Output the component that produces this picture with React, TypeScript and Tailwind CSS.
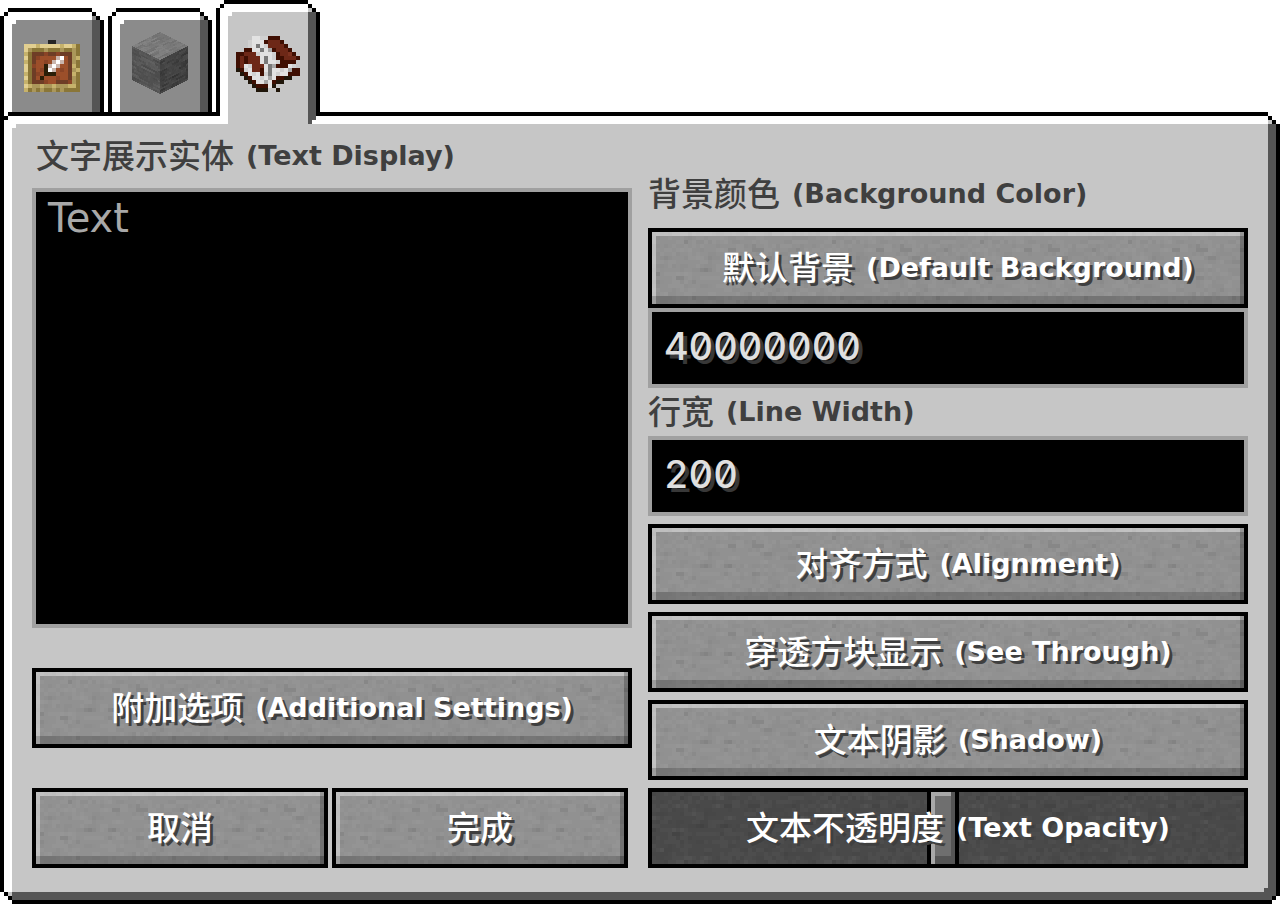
import { useId, useState, type ReactNode } from "react";

const palette: Record<string, string> = {
  x: "#000000",
  h: "#ffffff",
  c: "#c6c6c6",
  s: "#8b8b8b",
  e: "#555555",
  // item frame
  K: "#262626",
  Y: "#e2cf90",
  L: "#c6b26b",
  T: "#ab975a",
  O: "#8a7638",
  B: "#6e3d26",
  R: "#9c4f2a",
  Q: "#8a4426",
  p: "#c9b5ad",
  n: "#2b1f08",
  // book
  k: "#20160a",
  d: "#3f0f02",
  r: "#6d2817",
  m: "#7c3220",
  w: "#e2e2e2",
  l: "#d0d0d0",
  g: "#a6a6a6",
  G: "#7a7a7a",
};

function PixelArt({ rows, className = "" }: { rows: string[]; className?: string }) {
  const cols = rows[0].length;
  return (
    <svg
      aria-hidden="true"
      width={cols * 4}
      height={rows.length * 4}
      viewBox={`0 0 ${cols} ${rows.length}`}
      shapeRendering="crispEdges"
      className={className}
    >
      {rows.flatMap((row, y) =>
        [...row].map((key, x) =>
          key === "." ? null : (
            <rect key={`${x}-${y}`} x={x} y={y} width={1} height={1} fill={palette[key]} />
          ),
        ),
      )}
    </svg>
  );
}

const frameRows = [
  "......KK......",
  "YYYLYYYYYLYYLO",
  "YTOOOTOOOTOOTO",
  "LOBBBQBBQBBBTO",
  "YOBQRRRRphRBTL",
  "LOBRRQRphpRBTO",
  "YOQRRnphpRRBLO",
  "YOBRQnhpRQRBTL",
  "LOBQRnnnRRRBLO",
  "YOBRnRRRQRRBTO",
  "LOBBBQRRBBBQTO",
  "YLTTLTTLTTTLLO",
  "LOTOTOOTOTOOOO",
];

const bookRows = [
  "....wwllddd.....",
  "...lwwwdrrrd....",
  "...lwGwlrrrrd...",
  "..ddwwGwgdrrrd..",
  "ddrrrlwwwldrrmd.",
  "drdrrrwGwlddrrrd",
  "drdrrrwGwwldddd.",
  "drwlrrrwGgdddwl.",
  "kdlwrrdwGwwlwgdd",
  ".kdwlwdlGwlwwddd",
  "..kdwwlwgwddkk..",
  "...kdwwgwdkk....",
  "....kdddwk......",
  ".....kkk..k.....",
];

function noise(x: number, y: number, seed: number) {
  const v = Math.sin(x * 127.1 + y * 311.7 + seed * 74.7) * 43758.5453;
  return v - Math.floor(v);
}

function StoneFace({ transform, base, seed, w = 16, h = 18 }: { transform: string; base: number; seed: number; w?: number; h?: number }) {
  const cells: ReactNode[] = [];
  for (let y = 0; y < h; y++) {
    for (let x = 0; x < w; x++) {
      const streak = noise(Math.floor((x + noise(y, 3, seed) * 4) / 4), y, seed);
      const tone = Math.round(base + (streak - 0.5) * 20 + (noise(x, y, seed + 5) - 0.5) * 8);
      cells.push(
        <rect key={`${x}-${y}`} x={x} y={y} width={1.05} height={1.05} fill={`rgb(${tone},${tone},${tone})`} />,
      );
    }
  }
  return <g transform={transform}>{cells}</g>;
}

function StoneCube() {
  return (
    <svg aria-hidden="true" width="56" height="62" viewBox="0 0 56 62" shapeRendering="crispEdges">
      <StoneFace transform="matrix(1.75 -0.875 1.75 0.875 0 14)" base={122} seed={2} h={16} />
      <StoneFace transform="matrix(1.75 0.875 0 1.89 0 14)" base={84} seed={4} />
      <StoneFace transform="matrix(1.75 -0.875 0 1.89 28 28)" base={64} seed={7} />
    </svg>
  );
}

function Texture({ dark = false }: { dark?: boolean }) {
  const id = useId();
  const specks: ReactNode[] = [];
  for (let y = 0; y < 18; y++) {
    for (let x = 0; x < 37; x++) {
      const n = noise(x, y, 11);
      if (n > 0.22 && n < 0.78) continue;
      const wide = noise(x, y, 23) > 0.5 ? 8 : 4;
      specks.push(
        <rect
          key={`${x}-${y}`}
          x={x * 4}
          y={y * 4}
          width={wide}
          height={4}
          fill={n > 0.5 ? "#ffffff" : "#000000"}
          opacity={n < 0.02 ? 0.07 : 0.025}
        />,
      );
    }
  }
  return (
    <svg aria-hidden="true" shapeRendering="crispEdges" className="absolute inset-0 h-full w-full">
      <defs>
        <pattern id={id} width="148" height="72" patternUnits="userSpaceOnUse">
          {specks}
        </pattern>
      </defs>
      <rect width="100%" height="100%" fill={dark ? "#494949" : "#919191"} />
      <rect width="100%" height="100%" fill={`url(#${id})`} />
    </svg>
  );
}

function Caption({ zh, en }: { zh: string; en?: string }) {
  return (
    <span className="flex items-center gap-3 whitespace-nowrap">
      <span className="pb-1 font-['Noto_Sans_CJK_SC',sans-serif] text-[33px] leading-10 font-medium">{zh}</span>
      {en && <span className="font-['DejaVu_Sans',sans-serif] text-[27px] leading-10 font-bold">{en}</span>}
    </span>
  );
}

function StoneButton({ zh, en, className = "" }: { zh: string; en?: string; className?: string }) {
  return (
    <button
      type="button"
      className={`relative h-20 cursor-pointer border-4 border-black text-white [text-shadow:3px_3px_0_#3f3f3f] ${className}`}
    >
      <Texture />
      <span className="absolute inset-0 shadow-[inset_-4px_0_0_rgba(0,0,0,0.22),inset_0_-8px_0_rgba(0,0,0,0.18),inset_4px_4px_0_rgba(255,255,255,0.42)]" />
      <span className={`relative flex items-center justify-center ${en ? "pl-5" : ""}`}>
        <Caption zh={zh} en={en} />
      </span>
    </button>
  );
}

function TextBox({ id, value }: { id: string; value: string }) {
  const [text, setText] = useState(value);
  return (
    <input
      id={id}
      type="text"
      value={text}
      onChange={(e) => setText(e.target.value)}
      className="h-20 w-full border-4 border-[#a0a0a0] bg-black px-3 pb-1 font-['Inter',sans-serif] text-[38px] font-medium text-[#e0e0e0] tabular-nums slashed-zero outline-none [text-shadow:4px_4px_0_#383838]"
    />
  );
}

function Tab({ active = false, label, children }: { active?: boolean; label: string; children: ReactNode }) {
  return (
    <button
      type="button"
      role="tab"
      aria-selected={active}
      aria-label={label}
      className={`relative flex w-[104px] cursor-pointer justify-center ${active ? "z-10 -mb-3 h-[124px]" : "h-[104px]"}`}
    >
      <span
        className={`absolute inset-x-0 top-0 border-x-4 border-t-4 border-black ${active ? "bottom-2" : "bottom-0"}`}
      />
      <span
        className={`absolute inset-x-1 top-1 bottom-0 shadow-[inset_8px_8px_0_#fff,inset_-8px_0_0_#555] ${active ? "bg-[#c6c6c6]" : "bg-[#8b8b8b]"}`}
      />
      <PixelArt rows={["hhxx", "hxhh", "xhhh", "xhhh"]} className="absolute top-0 left-0" />
      <PixelArt rows={["hhh", "xhh", active ? "cxh" : "sxh"]} className="absolute top-0 right-0" />
      {active && <PixelArt rows={["h"]} className="absolute right-1 bottom-0" />}
      <span className={`relative ${active ? "pt-9" : "pt-6"}`}>{children}</span>
    </button>
  );
}

export default function App() {
  const [opacity, setOpacity] = useState(125);
  const [text, setText] = useState("Text");
  return (
    <main className="flex min-h-screen flex-col bg-white">
      <div role="tablist" className="flex h-28 items-end gap-1">
        <Tab label="物品展示实体">
          <span className="block pt-2">
            <PixelArt rows={frameRows} />
          </span>
        </Tab>
        <Tab label="方块展示实体">
          <StoneCube />
        </Tab>
        <Tab label="文字展示实体" active>
          <PixelArt rows={bookRows} />
        </Tab>
      </div>

      <section className="relative flex flex-1 border-4 border-black bg-[#c6c6c6] px-7 pt-2 pb-8 shadow-[inset_8px_8px_0_#fff,inset_-8px_-8px_0_#555]">
        <PixelArt rows={["xhxx", "xxhh", "xhhh", "xhhh"]} className="absolute -top-1 -left-1" />
        <PixelArt rows={["hhh", "xhh", "cxh"]} className="absolute -top-1 -right-1" />
        <PixelArt rows={["hxc", "hhx", "hhh"]} className="absolute -bottom-1 -left-1" />
        <PixelArt rows={["eeex", "eeex", "eexh", "xxhh"]} className="absolute -right-1 -bottom-1" />

        <div className="grid flex-1 grid-cols-2 gap-4">
          <div className="flex flex-col">
            <label htmlFor="text" className="flex h-16 items-center pl-1 text-[#3f3f3f]">
              <Caption zh="文字展示实体" en="(Text Display)" />
            </label>
            <textarea
              id="text"
              value={text}
              onChange={(e) => setText(e.target.value)}
              className="w-full flex-1 resize-none border-4 border-[#a0a0a0] bg-black px-3 py-1 font-['DejaVu_Sans',sans-serif] text-[40px] leading-[44px] text-[#a8a8a8] outline-none"
            />
            <StoneButton zh="附加选项" en="(Additional Settings)" className="mt-10" />
            <div className="mt-10 grid grid-cols-2 gap-1 pr-1">
              <StoneButton zh="取消" />
              <StoneButton zh="完成" />
            </div>
          </div>

          <div className="flex flex-col pt-9">
            <label htmlFor="background" className="flex h-[68px] items-center text-[#3f3f3f]">
              <Caption zh="背景颜色" en="(Background Color)" />
            </label>
            <StoneButton zh="默认背景" en="(Default Background)" />
            <TextBox id="background" value="40000000" />
            <label htmlFor="line-width" className="flex h-12 items-center text-[#3f3f3f]">
              <Caption zh="行宽" en="(Line Width)" />
            </label>
            <TextBox id="line-width" value="200" />
            <div className="mt-2 flex flex-col gap-2">
              <StoneButton zh="对齐方式" en="(Alignment)" />
              <StoneButton zh="穿透方块显示" en="(See Through)" />
              <StoneButton zh="文本阴影" en="(Shadow)" />
              <div className="relative h-20">
                <Texture dark />
                <input
                  id="opacity"
                  type="range"
                  min={0}
                  max={255}
                  value={opacity}
                  onChange={(e) => setOpacity(Number(e.target.value))}
                  className="relative block h-20 w-full cursor-pointer appearance-none border-4 border-black bg-transparent outline-none [&::-webkit-slider-thumb]:h-[72px] [&::-webkit-slider-thumb]:w-8 [&::-webkit-slider-thumb]:appearance-none [&::-webkit-slider-thumb]:border-x-4 [&::-webkit-slider-thumb]:border-black [&::-webkit-slider-thumb]:bg-[#6f6f6f] [&::-webkit-slider-thumb]:shadow-[inset_-4px_0_0_#555,inset_4px_4px_0_#a8a8a8,inset_0_-8px_0_#555]"
                />
                <label
                  htmlFor="opacity"
                  className="pointer-events-none absolute inset-0 flex items-center justify-center pl-5 text-white [text-shadow:3px_3px_0_#3f3f3f]"
                >
                  <Caption zh="文本不透明度" en="(Text Opacity)" />
                </label>
              </div>
            </div>
          </div>
        </div>
      </section>
    </main>
  );
}
